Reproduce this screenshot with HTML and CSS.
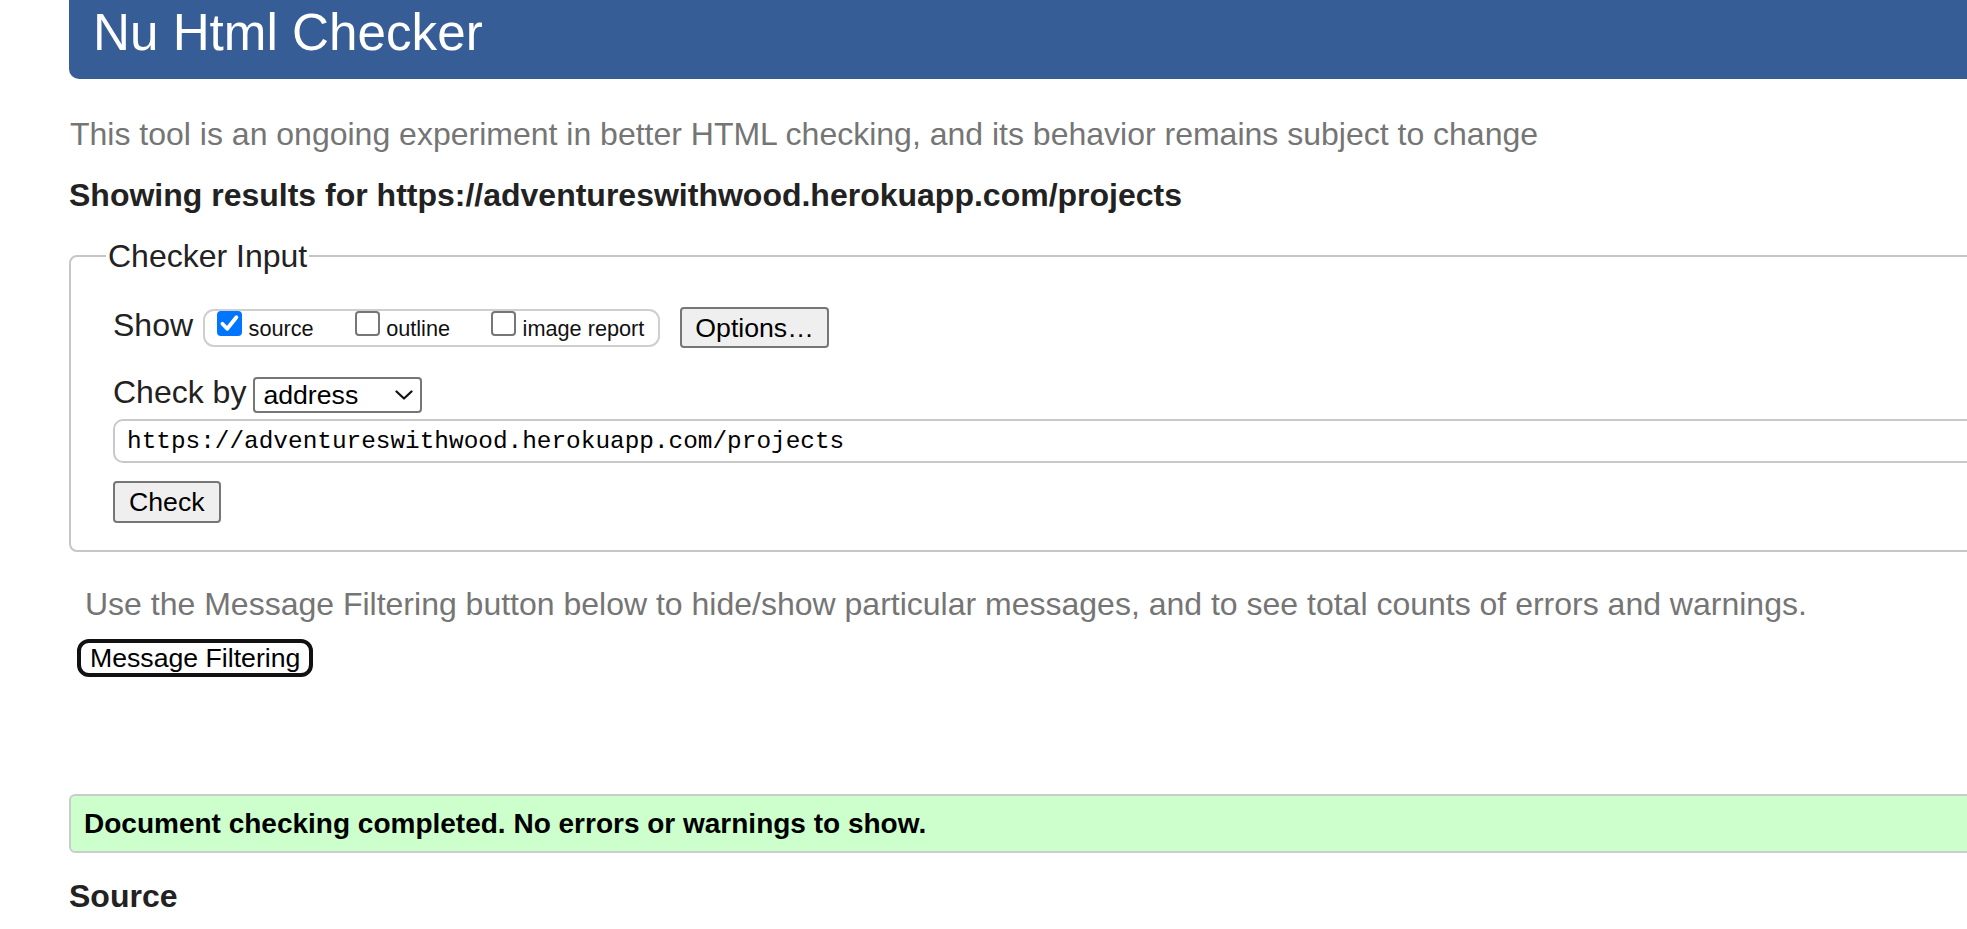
FILE: index.html
```html
<!DOCTYPE html>
<html lang="en">
<head>
<meta charset="utf-8">
<title>Nu Html Checker</title>
<link rel="stylesheet" href="styles.css">
</head>
<body>
<div class="page">
  <h1 class="title">Nu Html Checker</h1>
  <p class="lead">This tool is an ongoing experiment in better HTML checking, and its behavior remains subject to change</p>
  <p class="results-for">Showing results for https://adventureswithwood.herokuapp.com/projects</p>
  <form class="checker">
    <fieldset class="checker-fs">
      <legend class="checker-legend">Checker Input</legend>
      <div class="fs-body">
        <div class="row row-show">
          <span class="row-label show-label">Show</span>
          <div class="show-group">
            <label class="opt"><span class="cb cb-on" role="checkbox" aria-checked="true"><svg class="tick" width="21" height="21" viewBox="0 0 21 21"><path d="M3.4 10.8 L8.2 15.8 L17.4 4.2" fill="none" stroke="#fff" stroke-width="3.8" stroke-linecap="round" stroke-linejoin="round"/></svg></span><span class="opt-text">source</span></label>
            <label class="opt"><span class="cb" role="checkbox" aria-checked="false"></span><span class="opt-text">outline</span></label>
            <label class="opt"><span class="cb" role="checkbox" aria-checked="false"></span><span class="opt-text">image report</span></label>
          </div>
          <button type="button" class="btn btn-options">Options…</button>
        </div>
        <div class="row row-by">
          <span class="row-label by-label">Check by</span>
          <div class="select"><span class="select-text">address</span><svg class="chev" width="18" height="10" viewBox="0 0 18 10"><path d="M1.5 1.5 L9 8.5 L16.5 1.5" fill="none" stroke="#111" stroke-width="2.2" stroke-linecap="round" stroke-linejoin="round"/></svg></div>
        </div>
        <input class="url" type="text" value="https://adventureswithwood.herokuapp.com/projects">
        <button type="button" class="btn btn-check">Check</button>
      </div>
    </fieldset>
  </form>
  <p class="filter-note">Use the Message Filtering button below to hide/show particular messages, and to see total counts of errors and warnings.</p>
  <button type="button" class="filter-btn">Message Filtering</button>
  <div class="success">Document checking completed. No errors or warnings to show.</div>
  <h2 class="source-h">Source</h2>
</div>
</body>
</html>
```
FILE: styles.css
```css
html {
  overflow: hidden;
}
body {
  margin: 0;
  background: #fff;
  color: #1a1a1a;
  font-family: "Liberation Sans", Arial, sans-serif;
}
.page {
  margin-left: 69px;
  width: 2000px;
}
.title {
  margin: 0;
  height: 79px;
  box-sizing: border-box;
  padding: 3px 0 0 24px;
  background: #365d95;
  color: #fff;
  font-size: 51.2px;
  font-weight: normal;
  line-height: 59px;
  border-bottom-left-radius: 10px;
}
.lead {
  margin: 35px 0 0 1px;
  font-size: 32px;
  line-height: 40px;
  color: #757575;
}
.results-for {
  margin: 21px 0 0;
  font-size: 32px;
  line-height: 40px;
  font-weight: bold;
  color: #222;
}
.checker {
  margin: 21px 0 0;
}
.checker-fs {
  margin: 0;
  padding: 0 0 27px 35px;
  border: 2px solid #c6c6c6;
  border-radius: 8px;
}
.checker-legend {
  padding: 0 2px;
  font-size: 32px;
  line-height: 40px;
  color: #222;
}
.fs-body {
  padding-left: 7px;
}
.row {
  display: flex;
  align-items: center;
}
.row-label {
  font-size: 32px;
  line-height: 40px;
  color: #222;
}
.row-show {
  margin-top: 31px;
  height: 41px;
}
.show-label {
  margin-right: 10px;
  margin-bottom: 5px;
}
.show-group {
  display: flex;
  align-items: flex-start;
  height: 38px;
  box-sizing: border-box;
  border: 2px solid #cfcfcf;
  border-radius: 11px;
  padding: 0 14px 0 12px;
}
.opt {
  display: flex;
  align-items: flex-start;
}
.opt + .opt {
  margin-left: 41px;
}
.cb {
  display: flex;
  align-items: center;
  justify-content: center;
  width: 25px;
  height: 25px;
  box-sizing: border-box;
  border: 2px solid #767676;
  border-radius: 4px;
  background: #fff;
}
.cb-on {
  background: #0075ff;
  border-color: #0075ff;
}
.tick {
  display: block;
}
.opt-text {
  margin-left: 6.5px;
  margin-top: 3.5px;
  font-size: 21.7px;
  line-height: 30px;
  color: #111;
}
.btn {
  box-sizing: border-box;
  border: 2px solid #767676;
  border-radius: 4px;
  background: #efefef;
  color: #000;
  font-family: "Liberation Sans", Arial, sans-serif;
  font-size: 26.67px;
  line-height: 30px;
}
.btn-options {
  margin-left: 20px;
  height: 41px;
  padding: 0 13px;
}
.row-by {
  margin-top: 29px;
  height: 36px;
}
.by-label {
  margin-right: 7px;
  margin-bottom: 6px;
}
.select {
  display: flex;
  align-items: center;
  justify-content: space-between;
  width: 169px;
  height: 36px;
  box-sizing: border-box;
  border: 2px solid #767676;
  border-radius: 4px;
  padding: 0 7px 0 8px;
  background: #fff;
  font-size: 26.67px;
  color: #000;
}
.chev {
  display: block;
}
.url {
  display: block;
  margin-top: 6px;
  width: 1900px;
  height: 44px;
  box-sizing: border-box;
  border: 2px solid #c9c9c9;
  border-radius: 10px;
  padding: 0 12px;
  background: #fff;
  font-family: "Liberation Mono", "DejaVu Sans Mono", monospace;
  font-size: 24.4px;
  color: #000;
}
.btn-check {
  display: block;
  margin-top: 18px;
  height: 42px;
  padding: 0 14px;
}
.filter-note {
  margin: 32px 0 0 16px;
  font-size: 32px;
  line-height: 40px;
  color: #757575;
}
.filter-btn {
  display: block;
  margin: 15px 0 0 8px;
  height: 38px;
  box-sizing: border-box;
  padding: 0 9px;
  border: 4px solid #111;
  border-radius: 12px;
  background: #fff;
  color: #000;
  font-family: "Liberation Sans", Arial, sans-serif;
  font-size: 26.67px;
  line-height: 30px;
}
.success {
  margin-top: 117px;
  height: 59px;
  box-sizing: border-box;
  border: 2px solid #cccccc;
  border-radius: 6px;
  background: #ccffcc;
  padding: 0 13px;
  font-size: 28px;
  font-weight: bold;
  line-height: 55px;
  color: #000;
}
.source-h {
  margin: 23px 0 0;
  font-size: 32px;
  line-height: 40px;
  font-weight: bold;
  color: #222;
}
```
